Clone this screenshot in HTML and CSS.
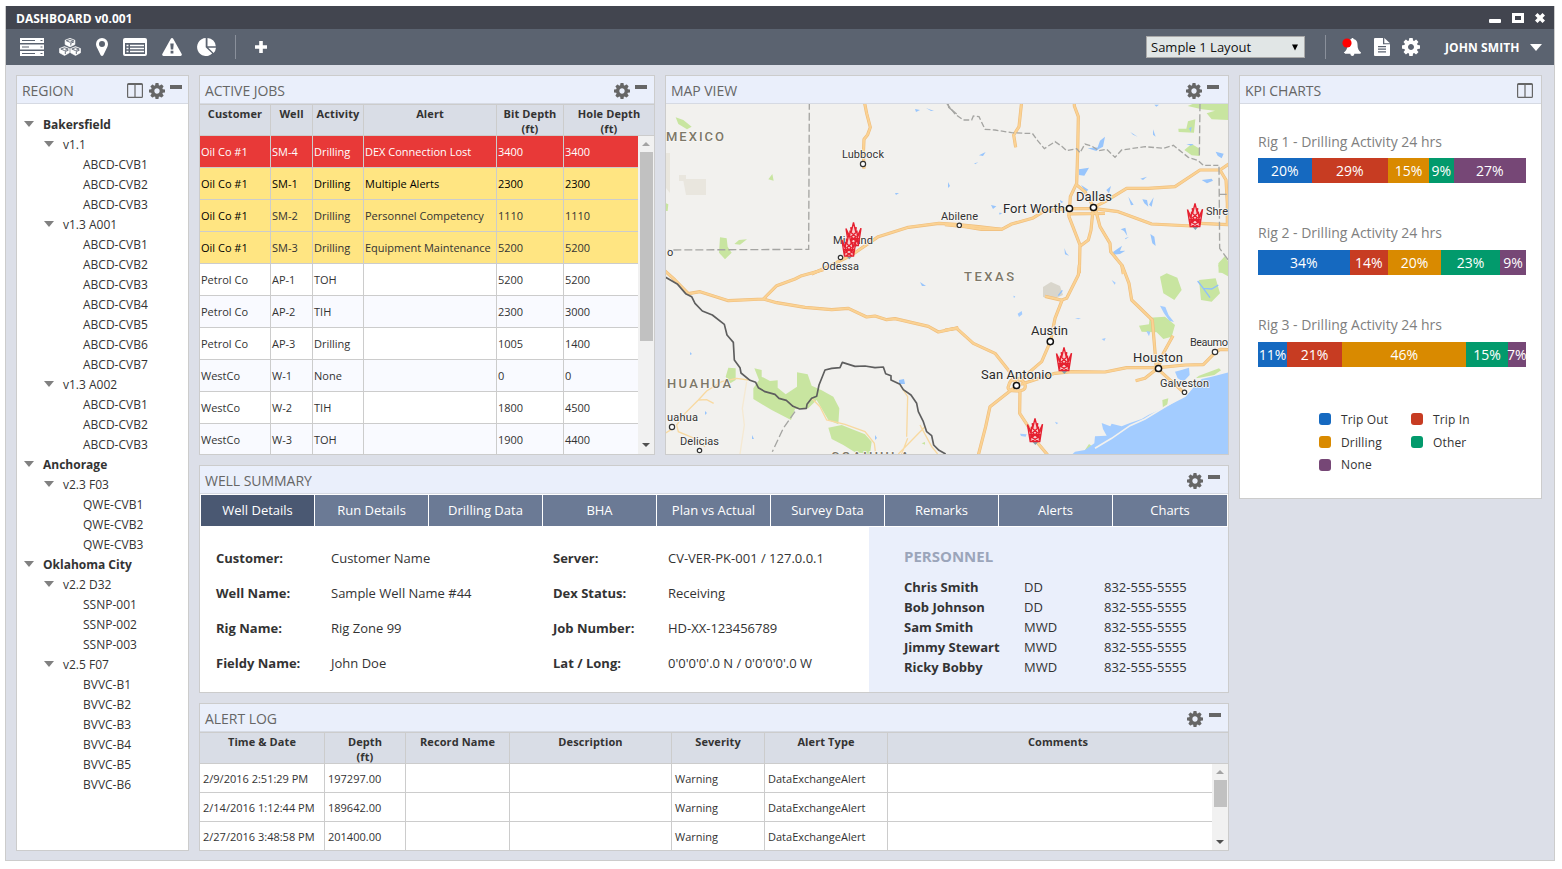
FILE: index.html
```html
<!DOCTYPE html>
<html lang="en">
<head>
<meta charset="utf-8">
<title>Dashboard v0.001</title>
<link rel="stylesheet" href="styles.css">
</head>
<body>
<svg class="defs" width="0" height="0" aria-hidden="true">
  <symbol id="gear" viewBox="0 128 1536 1536"><path fill-rule="evenodd" d="M1024 896q0 106-75 181t-181 75-181-75-75-181 75-181 181-75 181 75 75 181zm512-109v222q0 12-8 23t-20 13l-185 28q-19 54-39 91 35 50 107 138 10 12 10 25t-9 23q-27 37-99 108t-94 71q-12 0-26-9l-138-108q-44 23-91 38-16 136-29 186-7 28-36 28h-222q-14 0-24.5-8.5t-11.5-21.5l-28-184q-49-16-90-37l-141 107q-10 9-25 9-14 0-25-11-126-114-165-168-7-10-7-23 0-12 8-23 15-21 51-66.5t54-70.5q-27-50-41-99l-183-27q-13-2-21-12.5t-8-23.5v-222q0-12 8-23t19-13l186-28q14-46 39-92-40-57-107-138-10-12-10-24 0-10 9-23 26-36 98.5-107.5t94.5-71.5q13 0 26 10l138 107q44-23 91-38 16-136 29-186 7-28 36-28h222q14 0 24.5 8.5t11.5 21.5l28 184q49 16 90 37l142-107q9-9 24-9 13 0 25 10 129 119 165 170 7 8 7 22 0 12-8 23-15 21-51 66.5t-54 70.5q26 50 41 98l183 28q13 2 21 12.5t8 23.5z"/></symbol>
  <symbol id="split" viewBox="0 0 16 15"><path fill-rule="evenodd" d="M1.500 0h13A1.500 1.500 0 0 1 16 1.500v12a1.500 1.500 0 0 1-1.500 1.500h-13A1.500 1.500 0 0 1 0 13.500v-12A1.500 1.500 0 0 1 1.500 0zM1.200 2v11.800h6.200V2zM8.600 2v11.800h6.200V2z"/></symbol>
  <symbol id="rig" viewBox="-1 -1 46 76" overflow="visible">
    <path d="M15 69h16l-8 9z" fill="#7ea0ae"/>
    <path d="M0 18l11 15 5-15 6-18 6 16 5 17 11-16-8 51H8z" fill="#f9cfd0"/>
    <path d="M0 18l8 50h28l8-51M0 18l11 24M44 17L33 42M22 0l-7 30 14 12-16 14 20 12M22 0l7 30-14 12 16 14-20 12M6 34l10 22M38 34L28 56M12 24l-3 40M32 24l3 40M5 48h34M14 14l2 16M30 14l-2 16" fill="none" stroke="#e5202f" stroke-width="4"/>
  </symbol>
</svg>

<div class="app">
  <header class="titlebar">
    <h1 class="app-name">DASHBOARD v0.001</h1>
    <svg class="window-controls" width="58" height="12" viewBox="0 0 58 12" fill="#fff">
      <rect x="1" y="7" width="12" height="4" rx="1"/>
      <path fill-rule="evenodd" d="M24 1h12v10H24zM27 4v4h6V4z"/>
      <path d="M47 3.500L49.500 1 52 3.500 54.500 1 57 3.500 54.500 6 57 8.500 54.500 11 52 8.500 49.500 11 47 8.500 49.500 6z"/>
    </svg>
  </header>

  <nav class="toolbar">
    <svg class="ic-server" width="24" height="18" viewBox="0 0 24 18"><path fill="#fff" d="M0 0h24v5H0zM0 6.500h24v5H0zM0 13h24v5H0z"/><path stroke="#5b6370" stroke-width="1.200" d="M2 2.500h13M2 9h7M2 15.500h13M20.500 2.500h2M20.500 9h2M20.500 15.500h2"/></svg>
    <svg class="ic-cubes" width="22" height="18" viewBox="0 0 22 18"><g fill="#fff" stroke="#fff" stroke-width=".6" stroke-linejoin="round"><path d="M5.500 8.600L10.400 10.500v4.300L5.500 17.500.5 14.800v-4.300z"/><path d="M16.500 8.600l5 1.900v4.300l-5 2.700-4.900-2.700v-4.300z"/><path d="M11 .3l4.900 1.900v4.300L11 8.900 6.100 6.500V2.200z"/></g><g fill="none" stroke="#5b6370" stroke-width=".9"><path d="M1.800 11l3.700 1.600L9.200 11 5.500 9.800zM6.300 16V13.500l3.200-1.300M12.800 11l3.700 1.600 3.700-1.600-3.700-1.200zM17.300 16v-2.500l3.200-1.300M7.300 2.700L11 4.300l3.700-1.600L11 1.500zM11.800 7.500V5.200L15 3.900"/></g></svg>
    <svg class="ic-pin" width="12" height="18" viewBox="0 0 12 18"><path fill="#fff" fill-rule="evenodd" d="M6 0a6 6 0 0 1 6 6c0 2-.8 3.200-1.300 4.200L7.300 17.200q-1.300 1.500-2.600 0L1.300 10.200C.8 9.200 0 8 0 6a6 6 0 0 1 6-6zm0 3a3 3 0 1 0 0 6 3 3 0 0 0 0-6z"/></svg>
    <svg class="ic-list" width="24" height="18" viewBox="0 0 24 18"><path fill="#fff" fill-rule="evenodd" d="M2 0h20a2 2 0 0 1 2 2v14a2 2 0 0 1-2 2H2a2 2 0 0 1-2-2V2a2 2 0 0 1 2-2zM2 5v11h20V5z"/><path stroke="#fff" stroke-width="1.500" d="M3.500 7.500h2M7 7.500h14M3.500 10.500h2M7 10.500h14M3.500 13.500h2M7 13.500h14"/></svg>
    <svg class="ic-warn" width="20" height="18" viewBox="0 0 20 18"><path fill="#fff" fill-rule="evenodd" d="M10 0q.8 0 1.200.8L19.700 16q.6 1.700-1.200 2H1.500Q-.3 17.700.3 16L8.800.8Q9.200 0 10 0zM8.300 5.500l.5 6h2.400l.5-6zM8.600 12.800v2.700h2.800v-2.700z"/></svg>
    <svg class="ic-pie" width="19" height="18" viewBox="0 0 19 18"><path fill="#fff" d="M8.700 0v9.200l6.500 6.400A9 9 0 1 1 8.700 0zM10.500 0a8.500 8.500 0 0 1 8.300 8.300h-8.300zM11.300 9.700H19a8.600 8.600 0 0 1-2.400 5.200z"/></svg>
    <span class="divider"></span>
    <svg class="ic-plus" width="12" height="12" viewBox="0 0 12 12"><path fill="#fff" d="M4.200 0h3.600v4.200H12v3.600H7.800V12H4.200V7.800H0V4.200h4.200z"/></svg>
    <span class="spacer"></span>
    <div class="layout-select"><span>Sample 1 Layout</span><svg width="6" height="7" viewBox="0 0 6 7"><path d="M0 .5h6L3 6.500z"/></svg></div>
    <span class="divider"></span>
    <svg class="ic-bell" width="19" height="18" viewBox="0 0 19 18"><path fill="#fff" d="M10.500 0c.8 0 1 .4 1 1 3 .7 4 3 4 5.500 0 4 1 6 3.500 8 0 .9-.7 1.200-1.400 1.200H12.300c0 3-3.900 3-3.900 0H3.200c-.7 0-1.300-.4-1.300-1.200 2.500-2 3.600-4 3.600-8C5.500 4 6.500 1.700 9.500 1c0-.6.200-1 1-1z"/><circle cx="5" cy="5" r="4.600" fill="#f00"/></svg>
    <svg class="ic-doc" width="16" height="18" viewBox="0 0 16 18"><path fill="#fff" fill-rule="evenodd" d="M1 0h8v6.300h7V17q0 1-1 1H1q-1 0-1-1V1q0-1 1-1zM4 8v1.200h8V8zM4 10.600v1.200h8v-1.200zM4 13.200v1.200h8v-1.200z"/><path fill="#fff" d="M10.300 0L16 5.200h-5.700z"/></svg>
    <svg class="ic-settings" width="18" height="18"><use href="#gear" fill="#fff"/></svg>
    <span class="user">JOHN SMITH</span>
    <svg class="ic-caret" width="12" height="7" viewBox="0 0 12 7"><path fill="#fff" d="M0 0h12L6 7z"/></svg>
  </nav>

  <main class="board">
    <section class="panel region">
      <div class="panel-head"><h2>REGION</h2><svg class="split" width="16" height="15"><use href="#split"/></svg><svg class="gear" width="16" height="16"><use href="#gear"/></svg><i class="minus"></i></div>
      <ul class="tree">
        <li class="l1">Bakersfield</li>
        <li class="l2">v1.1</li>
        <li class="l3">ABCD-CVB1</li><li class="l3">ABCD-CVB2</li><li class="l3">ABCD-CVB3</li>
        <li class="l2">v1.3 A001</li>
        <li class="l3">ABCD-CVB1</li><li class="l3">ABCD-CVB2</li><li class="l3">ABCD-CVB3</li><li class="l3">ABCD-CVB4</li><li class="l3">ABCD-CVB5</li><li class="l3">ABCD-CVB6</li><li class="l3">ABCD-CVB7</li>
        <li class="l2">v1.3 A002</li>
        <li class="l3">ABCD-CVB1</li><li class="l3">ABCD-CVB2</li><li class="l3">ABCD-CVB3</li>
        <li class="l1">Anchorage</li>
        <li class="l2">v2.3 F03</li>
        <li class="l3">QWE-CVB1</li><li class="l3">QWE-CVB2</li><li class="l3">QWE-CVB3</li>
        <li class="l1">Oklahoma City</li>
        <li class="l2">v2.2 D32</li>
        <li class="l3">SSNP-001</li><li class="l3">SSNP-002</li><li class="l3">SSNP-003</li>
        <li class="l2">v2.5 F07</li>
        <li class="l3">BVVC-B1</li><li class="l3">BVVC-B2</li><li class="l3">BVVC-B3</li><li class="l3">BVVC-B4</li><li class="l3">BVVC-B5</li><li class="l3">BVVC-B6</li>
      </ul>
    </section>

    <section class="panel jobs">
      <div class="panel-head"><h2>ACTIVE JOBS</h2><svg class="gear" width="16" height="16"><use href="#gear"/></svg><i class="minus"></i></div>
      <div class="grid-head jobs-head"><span>Customer</span><span>Well</span><span>Activity</span><span>Alert</span><span>Bit Depth<br>(ft)</span><span>Hole Depth<br>(ft)</span></div>
      <div class="grid-scroll">
        <div class="grid-body jobs-body">
          <div class="row critical"><span>Oil Co #1</span><span>SM-4</span><span>Drilling</span><span>DEX Connection Lost</span><span>3400</span><span>3400</span></div>
          <div class="row warning strong"><span>Oil Co #1</span><span>SM-1</span><span>Drilling</span><span>Multiple Alerts</span><span>2300</span><span>2300</span></div>
          <div class="row warning"><span>Oil Co #1</span><span>SM-2</span><span>Drilling</span><span>Personnel Competency</span><span>1110</span><span>1110</span></div>
          <div class="row warning"><span>Oil Co #1</span><span>SM-3</span><span>Drilling</span><span>Equipment Maintenance</span><span>5200</span><span>5200</span></div>
          <div class="row"><span>Petrol Co</span><span>AP-1</span><span>TOH</span><span></span><span>5200</span><span>5200</span></div>
          <div class="row alt"><span>Petrol Co</span><span>AP-2</span><span>TIH</span><span></span><span>2300</span><span>3000</span></div>
          <div class="row"><span>Petrol Co</span><span>AP-3</span><span>Drilling</span><span></span><span>1005</span><span>1400</span></div>
          <div class="row alt"><span>WestCo</span><span>W-1</span><span>None</span><span></span><span>0</span><span>0</span></div>
          <div class="row"><span>WestCo</span><span>W-2</span><span>TIH</span><span></span><span>1800</span><span>4500</span></div>
          <div class="row alt"><span>WestCo</span><span>W-3</span><span>TOH</span><span></span><span>1900</span><span>4400</span></div>
        </div>
        <div class="scrollbar"><i class="up"></i><i class="thumb"></i><i class="down"></i></div>
      </div>
    </section>

    <section class="panel map">
      <div class="panel-head"><h2>MAP VIEW</h2><svg class="gear" width="16" height="16"><use href="#gear"/></svg><i class="minus"></i></div>
      <svg class="map-canvas" width="562" height="350" viewBox="666 104 562 350">
        <defs>
          <g id="highways">
            <g transform="translate(665 70) scale(.33333)">
              <path d="M598 95L605 130 616 172 608 194 597 208 595 255 597 296"/>
              <path d="M440 612L500 585 560 555 640 500 730 472 822 460 870 463 940 470 1010 478"/>
            </g>
            <g transform="translate(945 70) scale(.33333)">
              <path d="M230 95L222 170 206 195 212 232"/>
              <path d="M388 95L388 108 400 140 398 245 395 340 376 380 372 440 405 525 403 610"/>
              <path d="M0 464L60 470 110 478 170 478 200 462 262 445 300 422 370 416 450 416 520 425 620 462 740 468 765 460 851 464"/>
              <path d="M395 345L420 365 445 410 438 480 430 510 406 528M366 432L480 430M446 412L480 395 545 355 610 355 690 350 765 300 825 300 851 282M825 300L843 330 847 400 847 464"/>
              <path d="M452 420L465 470 495 520 497 545 530 585 535 612"/>
            </g>
            <g transform="translate(665 265) scale(.33333)">
              <path d="M0 18L30 45 70 86 105 80 190 107 295 102 335 62 390 42 410 32 475 14M295 102L335 113 420 127 500 134 550 130 605 156 630 153 665 164 690 161 790 184 820 201 880 188"/>
            </g>
            <g transform="translate(945 265) scale(.33333)">
              <path d="M0 195L35 190 85 235 150 265 200 328 215 360M403 0L400 30 365 100 352 104 330 160 316 230 290 290 220 350M300 94L352 106"/>
              <path d="M228 358L330 325 380 320 480 321 545 308 640 308 720 300 775 299 808 265 825 253 851 254"/>
              <path d="M531 0L552 55 560 105 622 165 634 308 716 382M684 212L655 265 640 308 600 340 572 347"/>
              <path d="M190 365Q195 340 215 341T240 360 215 378 190 365M215 362L135 425 122 485 100 570M225 375L224 445 250 485 275 530 308 570"/>
            </g>
          </g>
        </defs>
        <rect x="666" y="104" width="562" height="350" fill="#f2f1ee"/>

        <g fill="#c8e5a0">
          <g transform="translate(665 70) scale(.33333)">
            <path d="M32 142L55 150 80 170 66 178 40 162zM310 328L322 312 326 332zM165 502L185 505 188 530 200 548 180 568 162 548zM208 522L222 510 246 508 225 524zM0 398l10 5-2 20-8 0z"/>
          </g>
          <g transform="translate(945 70) scale(.33333)">
            <path d="M728 108L760 95 851 95 851 150 800 148 785 130 810 122 770 118zM700 176h24l5-22 22-6-4 40-46-2zM718 240L740 222 764 236 764 258 740 256zM820 580l20-22 11 20v30h-30z"/>
          </g>
          <g transform="translate(665 265) scale(.33333)">
            <path d="M190 308L212 310 212 345 196 355 182 335zM268 310L290 315 290 335 315 348 338 346 338 368 362 388 396 365 396 322 428 328 440 362 470 376 505 395 523 430 520 478 490 465 455 405 430 430 390 432 378 465 320 435 265 402 265 370 282 345zM490 488L530 480 560 492 600 508 620 530 615 567 570 562 535 540 500 522zM770 535l10-4v8z"/>
          </g>
          <g transform="translate(945 265) scale(.33333)">
            <path d="M645 35L665 25 697 38 710 75 688 105 655 85zM762 45L812 40 825 85 800 110 768 105zM820 0H851V35L825 20zM582 182L612 178 614 158 660 155 690 180 680 215 655 222 635 202 590 200zM652 405l18-5-4 24-12 8zM420 555l12-18 14 10-12 18z"/>
          </g>
        </g>
        <g fill="#e9e6de"><path d="M666 153h4v40l-4-5zM683 179h23v16h-20zM679 175h7v6h-7z"/><path d="M1043 287l8-5 9 4 3 9-9 4-11-2z" fill="#d9d6cc"/></g>

        <g transform="translate(945 265) scale(.33333)">
          <path fill="#a3ccff" d="M851 322L800 335 770 342 750 362 722 395 690 412 650 432 610 450 590 462 555 474 530 484 500 476 496 484 470 474 474 492 485 512 450 514 448 535 420 555 390 560 380 570 851 570zM690 320L712 314 732 308 734 330 715 350 698 340z"/>
          <path fill="#c8e5a0" d="M752 340l10-8 60-22 6 6-20 14-44 8z"/>
          <path fill="none" stroke="#f2f1ee" stroke-width="5" d="M722 388L600 462 555 482 500 520 450 550M730 350L755 340"/>
          <path fill="#a3ccff" d="M645 122l16 4 10 25 16 20-14-4-16-22zM604 198l12 2-4 14zM218 146l12-8 2 10-10 8zM225 506l20 2-3 7-14-2zM470 222l12-3-4 9zM205 92l6 2-4 6zM330 470l10 4-6 4zM500 45l12 8-3 6zM390 160l18-1-8 4z"/>
          <path fill="none" stroke="#8fbffc" stroke-width="4" d="M758 48L775 70 795 98M775 70L800 72 820 60M340 92L352 76"/>
        </g>
        <g fill="#98c5fc">
          <g transform="translate(945 70) scale(.33333)">
            <path d="M402 298l30-5-14 24-16-2zM455 240l10-28 15-12-6 30zM428 235l40-4-14 12zM102 256l20-10-8 12zM138 405l16 4-10 8zM88 280l12-3-10 6zM550 380l16 24-8 2zM592 388l14 2 4 20-12-10zM612 404l14-22-6 28zM770 330l30-4 4 6-18 8zM586 326l20-6-12 10zM527 478l14-5 6 25-10-15zM540 505l12-5-10 8zM616 492l12 8 4 28-10-8zM505 545l26-18-6 16 16-1-16 10-22 2zM358 534l6 15 8 8-12-4zM484 360l14-12-6 22zM556 186l22 14-14-6zM624 178l8 22-8-6zM812 245l24 6-6 14-12-8zM628 104h14l-8 6zM732 175l8-5-3 16zM724 222h22l-8 5zM408 345l22 14-8 8zM345 390l10 6-8 4zM162 428l10 1-8 5z"/>
          </g>
          <path d="M915 109l5 1-4 2zM926 108l8 3-3 0zM948 182l2 4-2 2zM895 193h4l-3 2zM920 282l6 4-4 0zM899 380l5-1 1 5-6 0zM752 435l2 4-2 0zM705 411l2 2-2 2zM875 435l2 3-2 2zM690 352l2 2-2 1z"/>
        </g>

        <g class="minor-roads" transform="translate(665 265) scale(.33333)">
          <path d="M250 345L215 340 170 350 125 378 100 405 60 445 35 480 40 500 100 525 120 545M100 405L125 404 146 415M440 400L465 425 485 465 540 478 600 500 628 535 632 567M705 360L728 395 725 515M780 485L700 567M728 520L710 567M765 480L800 545 818 567M0 505L25 490"/>
          <path class="faint" d="M245 350L232 430 238 480 225 567"/>
        </g>
        <use href="#highways" class="road-edge"/>
        <use href="#highways" class="road-fill"/>

        <g class="state-line">
          <g transform="translate(665 70) scale(.33333)"><path class="long-dash" d="M433 95L431 538 10 540"/><path d="M849 100L851 112 875 132"/></g>
          <g transform="translate(945 70) scale(.33333)">
            <path class="short-dash" d="M5 100L30 132 55 150 80 150 85 138 102 140 120 178 150 180 200 188 240 190 262 190 278 212 298 236 330 215 352 230 365 242 395 236 405 248 420 222 440 228 462 242 485 238 510 262 530 240 600 230 655 235 685 226 730 262 760 272 775 286 820 286"/>
            <path class="long-dash" d="M765 100L763 262M822 290L824 535 851 572M822 373H845"/>
          </g>
          <g transform="translate(665 265) scale(.33333)"><path class="long-dash" d="M390 440L355 490 322 560"/></g>
        </g>
        <path class="country-line" transform="translate(665 265) scale(.33333)" d="M0 36L38 58 62 86 80 95 90 115 112 138 142 150 178 178 186 210 205 232 208 285 225 308 228 324 255 346 272 352 280 368 300 380 330 388 342 400 364 406 384 424 404 432 424 430 426 418 440 400 455 394 462 360 480 315 500 310 525 308 532 292 570 304 600 303 630 308 655 306 662 326 678 332 678 345 705 358 715 374 738 390 755 415 760 440 775 470 785 500 800 512 806 540 822 556 842 567"/>

        <g class="city-dots">
          <circle cx="863" cy="164" r="2.600"/><circle cx="840.500" cy="257.500" r="2.200"/><circle cx="959.300" cy="225.300" r="2.200"/><circle cx="1184.500" cy="392.300" r="2.200"/><circle cx="1215" cy="352" r="2.700"/><circle cx="672" cy="427" r="2.600"/><circle cx="699.500" cy="450.500" r="2.200"/>
          <g class="major"><circle cx="1069.500" cy="208.500" r="3.100"/><circle cx="1093.500" cy="207.500" r="3.100"/><circle cx="1050.300" cy="341.600" r="3.100"/><circle cx="1016.500" cy="385.500" r="3.100"/><circle cx="1158.500" cy="368.500" r="3.100"/></g>
        </g>
        <g class="labels">
          <text x="842" y="158" textLength="42">Lubbock</text>
          <text x="833" y="244" textLength="40">Midland</text>
          <text x="822" y="270" textLength="37">Odessa</text>
          <text x="941" y="220" textLength="37">Abilene</text>
          <text x="1206" y="215" textLength="22">Shre</text>
          <text x="1190" y="346" textLength="38">Beaumo</text>
          <text x="1160" y="387" textLength="49">Galveston</text>
          <text x="667" y="421" textLength="31">uahua</text>
          <text x="680" y="445" textLength="39">Delicias</text>
          <text x="667" y="256" textLength="7">o</text>
          <g class="big">
            <text x="1003" y="212.500" textLength="62">Fort Worth</text>
            <text x="1076" y="200.500" textLength="36">Dallas</text>
            <text x="1031" y="334.500" textLength="37">Austin</text>
            <text x="981" y="378.500" textLength="71">San Antonio</text>
            <text x="1133" y="361.500" textLength="50">Houston</text>
          </g>
          <g class="state">
            <text x="666" y="140.500" textLength="58">MEXICO</text>
            <text x="964" y="280.500" textLength="50">TEXAS</text>
            <text x="667" y="387.500" textLength="64">HUAHUA</text>
            <text x="831" y="460.500" textLength="78">COAHUILA</text>
          </g>
        </g>
        <use href="#rig" x="845" y="222" width="17" height="26"/>
        <use href="#rig" x="841.500" y="233.500" width="15" height="25"/>
        <use href="#rig" x="1187" y="203" width="16" height="26"/>
        <use href="#rig" x="1056" y="347" width="16" height="26"/>
        <use href="#rig" x="1027" y="418" width="16" height="26"/>
      </svg>
    </section>

    <section class="panel kpi">
      <div class="panel-head"><h2>KPI CHARTS</h2><svg class="split" width="16" height="15"><use href="#split"/></svg></div>
      <div class="charts">
        <div class="chart"><h3>Rig 1 - Drilling Activity 24 hrs</h3><div class="bar"><span class="out" style="width:53.500px">20%</span><span class="in" style="width:76.500px">29%</span><span class="drill" style="width:41px">15%</span><span class="other" style="width:24.500px">9%</span><span class="none" style="width:72.500px">27%</span></div></div>
        <div class="chart"><h3>Rig 2 - Drilling Activity 24 hrs</h3><div class="bar"><span class="out" style="width:91.700px">34%</span><span class="in" style="width:38.300px">14%</span><span class="drill" style="width:53px">20%</span><span class="other" style="width:59.300px">23%</span><span class="none" style="width:25.700px">9%</span></div></div>
        <div class="chart"><h3>Rig 3 - Drilling Activity 24 hrs</h3><div class="bar"><span class="out" style="width:29px">11%</span><span class="in" style="width:55.300px">21%</span><span class="drill" style="width:124px">46%</span><span class="other" style="width:41.400px">15%</span><span class="none" style="width:18.300px">7%</span></div></div>
      </div>
      <div class="legend"><span><i class="out"></i>Trip Out</span><span><i class="in"></i>Trip In</span><span><i class="drill"></i>Drilling</span><span><i class="other"></i>Other</span><span><i class="none"></i>None</span></div>
    </section>

    <section class="panel summary">
      <div class="panel-head"><h2>WELL SUMMARY</h2><svg class="gear" width="16" height="16"><use href="#gear"/></svg><i class="minus"></i></div>
      <div class="tabs"><a class="active">Well Details</a><a>Run Details</a><a>Drilling Data</a><a>BHA</a><a>Plan vs Actual</a><a>Survey Data</a><a>Remarks</a><a>Alerts</a><a>Charts</a></div>
      <div class="summary-body">
        <div class="details">
          <b>Customer:</b><span>Customer Name</span><b>Server:</b><span>CV-VER-PK-001 / 127.0.0.1</span>
          <b>Well Name:</b><span>Sample Well Name #44</span><b>Dex Status:</b><span>Receiving</span>
          <b>Rig Name:</b><span>Rig Zone 99</span><b>Job Number:</b><span>HD-XX-123456789</span>
          <b>Fieldy Name:</b><span>John Doe</span><b>Lat / Long:</b><span>0'0'0'0'.0 N / 0'0'0'0'.0 W</span>
        </div>
        <div class="personnel">
          <h3>PERSONNEL</h3>
          <div class="people">
            <b>Chris Smith</b><span>DD</span><span>832-555-5555</span>
            <b>Bob Johnson</b><span>DD</span><span>832-555-5555</span>
            <b>Sam Smith</b><span>MWD</span><span>832-555-5555</span>
            <b>Jimmy Stewart</b><span>MWD</span><span>832-555-5555</span>
            <b>Ricky Bobby</b><span>MWD</span><span>832-555-5555</span>
          </div>
        </div>
      </div>
    </section>

    <section class="panel log">
      <div class="panel-head"><h2>ALERT LOG</h2><svg class="gear" width="16" height="16"><use href="#gear"/></svg><i class="minus"></i></div>
      <div class="grid-head log-head"><span>Time &amp; Date</span><span>Depth<br>(ft)</span><span>Record Name</span><span>Description</span><span>Severity</span><span>Alert Type</span><span>Comments</span></div>
      <div class="grid-scroll">
        <div class="grid-body log-body">
          <div class="row"><span>2/9/2016 2:51:29 PM</span><span>197297.00</span><span></span><span></span><span>Warning</span><span>DataExchangeAlert</span><span></span></div>
          <div class="row"><span>2/14/2016 1:12:44 PM</span><span>189642.00</span><span></span><span></span><span>Warning</span><span>DataExchangeAlert</span><span></span></div>
          <div class="row"><span>2/27/2016 3:48:58 PM</span><span>201400.00</span><span></span><span></span><span>Warning</span><span>DataExchangeAlert</span><span></span></div>
        </div>
        <div class="scrollbar"><i class="up"></i><i class="thumb"></i><i class="down"></i></div>
      </div>
    </section>
  </main>
</div>
</body>
</html>
```

FILE: styles.css
```css
* { box-sizing: border-box; }
body { margin: 0; background: #fff; color: #333; font: 12px/20px "Open Sans", sans-serif; overflow: hidden; }
h1, h2, h3 { margin: 0; font-weight: 400; }
svg { display: block; flex: none; }
.defs { position: absolute; }

.app { margin: 6px 0 0 5px; width: 1550px; height: 855px; border: 1px solid #ccc; border-top: 0; background: #dcdfe8; }

.titlebar { height: 23px; padding: 0 8px 0 10px; background: #42454f; display: flex; align-items: center; justify-content: space-between; }
.app-name { color: #fff; font-size: 12px; font-weight: 700; line-height: 23px; padding-top: 2px; }

.toolbar { height: 36px; padding: 0 12px 0 14px; background: #5b6370; display: flex; align-items: center; }
.ic-cubes { margin-left: 15px; }
.ic-pin { margin-left: 15px; }
.ic-list { margin-left: 15px; }
.ic-warn { margin-left: 15px; }
.ic-pie { margin-left: 15px; }
.divider { width: 1px; height: 24px; background: #8a909b; margin: 0 19px; }
.spacer { flex: 1; }
.layout-select { width: 159px; height: 22px; border: 1px solid #a9a9a9; background: #e1e6e6; padding: 0 6px 0 4px; display: flex; align-items: center; justify-content: space-between; color: #111; font-size: 13px; }
.layout-select + .divider { margin: 0 16px 0 20px; }
.ic-doc { margin-left: 13px; }
.ic-settings { margin-left: 12px; }
.user { margin-left: 25px; padding-top: 1px; color: #fff; font-weight: 700; width: 75px; white-space: nowrap; letter-spacing: .1px; }
.ic-caret { margin-left: 10px; }

.board { padding: 10px; display: grid; gap: 10px; grid-template-columns: 173px 456px 564px 303px; grid-template-rows: 380px 228px 148px; }
.panel { background: #fff; border: 1px solid #ccc; overflow: hidden; }
.region { grid-row: 1 / 4; }
.jobs { grid-column: 2; grid-row: 1; }
.map { grid-column: 3; grid-row: 1; }
.kpi { grid-column: 4; grid-row: 1 / 3; height: 424px; }
.summary { grid-column: 2 / 4; grid-row: 2; }
.log { grid-column: 2 / 4; grid-row: 3; }

.panel-head { height: 28px; padding: 0 7px 0 5px; background: #eaeffb; border-bottom: 1px solid #d6dae3; display: flex; align-items: flex-start; fill: #666; }
.panel-head h2 { flex: 1; font-size: 14px; line-height: 29px; color: #666; letter-spacing: -.05px; }
.panel-head .gear { margin-top: 7px; }
.panel-head .split { margin-top: 7px; }
.split + .gear { margin-left: 6px; }
.minus { width: 12px; height: 4px; background: #666; margin: 9px 0 0 5px; }
.region .panel-head { padding-right: 6px; }
.map .panel-head { padding-right: 9px; }
.summary .panel-head, .kpi .panel-head { padding-right: 8px; }
.log .minus { margin-left: 6px; }

.tree { list-style: none; margin: 0; padding: 11px 0 0; }
.tree li { height: 20px; line-height: 20px; display: flex; }
.tree .l1 { padding-left: 7px; font-weight: 700; }
.tree .l2 { padding-left: 27px; }
.tree .l3 { padding-left: 66px; }
.tree .l1::before, .tree .l2::before { content: ""; border: 5px solid transparent; border-top: 6px solid #808080; border-bottom: 0; height: 0; margin: 6px 9px 0 0; }

.grid-head { height: 32px; background: #d9dde6; border-top: 1px solid #ccc; border-bottom: 1px solid #ccc; display: grid; font-size: 11px; font-weight: 700; line-height: 15px; text-align: center; letter-spacing: .1px; }
.grid-head span { border-right: 1px solid #ccc; padding-top: 1px; }
.grid-head span:last-child { border-right: 0; }
.jobs-head { grid-template-columns: 71px 42px 51px 133px 67px 90px; }
.grid-scroll { display: flex; overflow: hidden; }
.row { display: grid; border-bottom: 1px solid #ccc; font-size: 11px; }
.row span { border-right: 1px solid #ccc; white-space: nowrap; }
.row span:last-child { border-right: 0; }
.jobs .grid-scroll { height: 318px; }
.jobs-body .row { grid-template-columns: 71px 42px 51px 133px 67px 74px; height: 32px; line-height: 32px; }
.jobs-body .row span { padding-left: 1px; }
.row.alt { background: #f9faff; }
.row.critical { background: #e83938; color: #fff; }
.row.warning { background: #ffe582; }
.row.strong, .row.warning span:first-child { color: #000; }

.scrollbar { width: 17px; flex: none; background: #f1f1f1; display: flex; flex-direction: column; align-items: center; padding: 6px 1px 7px 0; }
.up, .down { border: 4px solid transparent; height: 0; width: 0; }
.up { border-top: 0; border-bottom-color: #a3a3a3; }
.down { border-bottom: 0; border-top-color: #505050; margin-top: auto; }
.thumb { width: 13px; height: 189px; margin: 6px 0 0 0; background: #c1c1c1; }
.log .thumb { height: 27px; }

.minor-roads { fill: none; stroke: #f8d9a0; stroke-width: 4; }
.minor-roads .faint { stroke: #f5e9d2; }
.road-edge { fill: none; stroke: #eebd7c; stroke-width: 9.500; stroke-linejoin: round; }
.road-fill { fill: none; stroke: #fbd293; stroke-width: 6; stroke-linejoin: round; }
.state-line { fill: none; stroke: #a5a5a2; stroke-width: 4; }
.long-dash { stroke-dasharray: 24 9; }
.short-dash { stroke-dasharray: 17 7; }
.country-line { fill: none; stroke: #5e5e5e; stroke-width: 5; stroke-linejoin: round; }
.city-dots { fill: #fff; stroke: #333; stroke-width: 1.200; }
.city-dots .major { stroke: #111; stroke-width: 1.500; }
.labels { font: 11px Roboto, sans-serif; fill: #333; stroke: #f8f7f5; stroke-width: 1.500px; paint-order: stroke; }
.labels .big { font-size: 13px; fill: #2a2a2a; }
.labels .state { font-size: 13px; font-weight: 500; fill: #7d7768; }

.charts { padding: 27px 15px 0 18px; }
.chart { height: 92px; }
.chart h3 { font-size: 14px; line-height: 22px; color: #808080; margin-bottom: 5px; white-space: nowrap; }
.chart + .chart h3 { line-height: 20px; margin-bottom: 7px; }
.bar { height: 25px; display: flex; color: #fff; font-size: 14px; line-height: 26px; text-align: center; }
.bar span { flex: none; display: flex; justify-content: center; }
.out { background: #1569c0; }
.in { background: #c73c22; }
.drill { background: #d98a00; }
.other { background: #029a6c; }
.none { background: #764776; }
.legend { padding: 1px 0 0 79px; display: grid; grid-template-columns: 92px 92px; font-size: 12px; letter-spacing: .15px; line-height: 23px; }
.legend span { display: flex; align-items: center; height: 22.700px; }
.legend i { width: 12px; height: 12px; border-radius: 3px; margin-right: 10px; }

.tabs { display: grid; grid-template-columns: repeat(9, 114px); margin: 1px 1px 1px; height: 31px; }
.tabs a { background: #6b7a95; border-right: 1px solid #fff; color: #fff; font-size: 13px; line-height: 31px; text-align: center; }
.tabs a:last-child { border-right: 0; }
.tabs .active { background: #4a5872; }
.summary-body { display: flex; height: 165px; font-size: 13px; }
.details { width: 669px; padding: 14px 0 0 16px; display: grid; grid-template-columns: 115px 222px 115px 1fr; grid-auto-rows: 35px; line-height: 35px; }
.personnel { flex: 1; background: #eaeffb; padding: 19px 0 0 35px; }
.personnel h3 { font-size: 15px; font-weight: 700; color: #9ba5ba; line-height: 20px; }
.people { margin-top: 11px; display: grid; grid-template-columns: 120px 80px 1fr; line-height: 20px; }

.log-head { grid-template-columns: 125px 81px 104px 162px 93px 123px 1fr; }
.log-body .row { grid-template-columns: 125px 81px 104px 162px 93px 123px 324px; height: 29px; line-height: 29px; }
.log-body .row span { padding-left: 3px; }
```
